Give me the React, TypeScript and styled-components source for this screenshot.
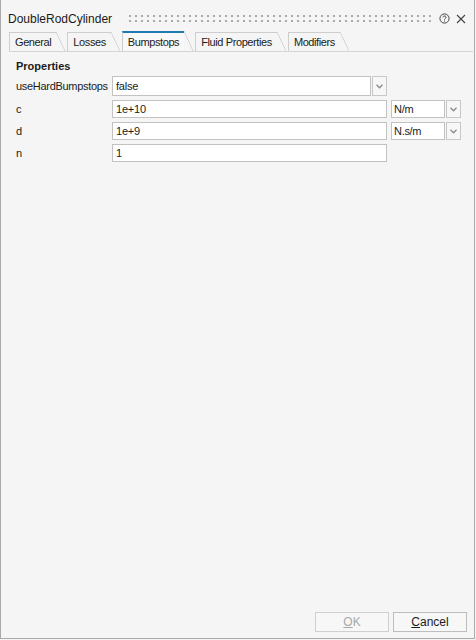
import styled, { createGlobalStyle } from "styled-components";

const GlobalStyle = createGlobalStyle`
  html, body {
    margin: 0;
    padding: 0;
    background: #f5f5f5;
  }
  body {
    font-family: "Liberation Sans", Arial, sans-serif;
    color: #1b1b1b;
  }
`;

const tabs = ["General", "Losses", "Bumpstops", "Fluid Properties", "Modifiers"];
const activeTab = "Bumpstops";

const App = () => {
  return (
    <>
      <GlobalStyle />
      <Window>
        <TitleBar>
          <Title>DoubleRodCylinder</Title>
          <Grip>
            <svg width="100%" height="7">
              <defs>
                <pattern id="grip" width="6" height="5" patternUnits="userSpaceOnUse">
                  <rect x="0" y="0" width="2" height="2" fill="#a9a9a9" />
                </pattern>
              </defs>
              <rect x="0" y="0" width="100%" height="7" fill="url(#grip)" />
            </svg>
          </Grip>
          <TitleIcons>
            <svg width="11" height="11" viewBox="0 0 11 11">
              <circle cx="5.5" cy="5.5" r="4.6" fill="none" stroke="#444" strokeWidth="1" />
              <path
                d="M3.9 4.3 C3.9 2.6 7.1 2.6 7.1 4.2 C7.1 5.3 5.5 5.3 5.5 6.6"
                fill="none"
                stroke="#444"
                strokeWidth="1"
              />
              <rect x="5" y="7.6" width="1" height="1" fill="#444" />
            </svg>
            <svg width="10" height="10" viewBox="0 0 10 10">
              <path d="M1 1 L9 9 M9 1 L1 9" stroke="#444" strokeWidth="1.1" />
            </svg>
          </TitleIcons>
        </TitleBar>

        <TabStrip>
          {tabs.map((t) => (
            <Tab key={t} $active={t === activeTab}>
              {t}
            </Tab>
          ))}
        </TabStrip>

        <Content>
          <SectionHeader>Properties</SectionHeader>
          <Rows>
            <Row $h={20}>
              <Label>useHardBumpstops</Label>
              <Field $w={259} $h={20}>false</Field>
              <DropButton $h={20}>
                <Chevron />
              </DropButton>
            </Row>
            <Row $h={18}>
              <Label>c</Label>
              <Field $w={275} $h={18}>1e+10</Field>
              <UnitBox>N/m</UnitBox>
              <DropButton $h={18}>
                <Chevron />
              </DropButton>
            </Row>
            <Row $h={18}>
              <Label>d</Label>
              <Field $w={275} $h={18}>1e+9</Field>
              <UnitBox>N.s/m</UnitBox>
              <DropButton $h={18}>
                <Chevron />
              </DropButton>
            </Row>
            <Row $h={18}>
              <Label>n</Label>
              <Field $w={275} $h={18}>1</Field>
            </Row>
          </Rows>
        </Content>

        <Footer>
          <Button $disabled>
            <u>O</u>K
          </Button>
          <Button>
            <u>C</u>ancel
          </Button>
        </Footer>
      </Window>
    </>
  );
};

export default App;

const Chevron = () => (
  <svg width="7" height="5" viewBox="0 0 7 5">
    <path d="M0.5 0.8 L3.5 3.8 L6.5 0.8" fill="none" stroke="#8a8a8a" strokeWidth="1.3" />
  </svg>
);

// Styled Components
const Window = styled.div`
  width: 475px;
  height: 639px;
  box-sizing: border-box;
  border: 1px solid #aaaaaa;
  border-top: none;
  display: flex;
  flex-direction: column;
  background: #f5f5f5;
`;

const TitleBar = styled.div`
  height: 31px;
  display: flex;
  flex-direction: row;
  align-items: center;
  padding: 0 7px 0 7px;
  box-sizing: border-box;
`;

const Title = styled.div`
  font-size: 12px;
  color: #1b1b1b;
  margin-top: 7px;
`;

const Grip = styled.div`
  flex: 1;
  height: 7px;
  margin: 6px 8px 0 17px;
  display: flex;
`;

const TitleIcons = styled.div`
  display: flex;
  align-items: center;
  gap: 6px;
  margin-top: 6px;
  padding-right: 1px;
`;

const TabStrip = styled.div`
  height: 20px;
  display: flex;
  flex-direction: row;
  align-items: flex-end;
  gap: 11px;
  margin: 0 1px 0 8px;
  border-bottom: 1px solid #d4d4d4;
`;

const Tab = styled.div<{ $active?: boolean }>`
  position: relative;
  height: 18px;
  line-height: 19px;
  padding: 0 5px 0 5px;
  font-size: 11px;
  letter-spacing: -0.4px;
  color: #1b1b1b;
  border-left: 1px solid #cdcdcd;
  border-top: ${(p) => (p.$active ? "2px solid #1f7ab3" : "1px solid #cdcdcd")};
  background: ${(p) => (p.$active ? "#f8f8f8" : "#f5f5f5")};

  &::after {
    content: "";
    position: absolute;
    left: 100%;
    top: ${(p) => (p.$active ? -2 : -1)}px;
    bottom: 0;
    width: 9px;
    background: linear-gradient(
      to top right,
      transparent calc(50% - 0.7px),
      #cdcdcd 50%,
      transparent calc(50% + 0.7px)
    );
  }
`;

const Content = styled.div`
  flex: 1;
  padding: 7px 0 0 15px;
  font-size: 11px;
`;

const SectionHeader = styled.div`
  height: 14px;
  line-height: 14px;
  font-weight: bold;
  font-size: 11px;
  margin-bottom: 3px;
`;

const Rows = styled.div`
  display: flex;
  flex-direction: column;
  gap: 4px;
`;

const Row = styled.div<{ $h: number }>`
  height: ${(p) => p.$h}px;
  display: flex;
  flex-direction: row;
  align-items: center;
`;

const Label = styled.div`
  width: 96px;
  font-size: 11px;
  letter-spacing: -0.3px;
  white-space: nowrap;
`;

const Field = styled.div<{ $w: number; $h: number }>`
  width: ${(p) => p.$w}px;
  height: ${(p) => p.$h}px;
  line-height: ${(p) => p.$h - 2}px;
  box-sizing: border-box;
  border: 1px solid #c2c2c2;
  background: #ffffff;
  padding-left: 3px;
  font-size: 11px;
  letter-spacing: -0.2px;
`;

const UnitBox = styled.div`
  width: 54px;
  height: 18px;
  line-height: 16px;
  box-sizing: border-box;
  border: 1px solid #c2c2c2;
  background: #ffffff;
  margin-left: 4px;
  padding-left: 2px;
  font-size: 11px;
  letter-spacing: -0.3px;
`;

const DropButton = styled.div<{ $h: number }>`
  width: 15px;
  height: ${(p) => p.$h}px;
  box-sizing: border-box;
  border: 1px solid #c8c8c8;
  background: #f7f7f7;
  margin-left: 1px;
  display: flex;
  align-items: center;
  justify-content: center;
`;

const Footer = styled.div`
  display: flex;
  flex-direction: row;
  justify-content: flex-end;
  gap: 4px;
  padding: 0 7px 6px 0;
`;

const Button = styled.div<{ $disabled?: boolean }>`
  width: 74px;
  height: 20px;
  line-height: 18px;
  box-sizing: border-box;
  border: 1px solid ${(p) => (p.$disabled ? "#cfcfcf" : "#bdbdbd")};
  background: #f7f7f7;
  text-align: center;
  font-size: 12px;
  color: ${(p) => (p.$disabled ? "#a8a8a8" : "#1b1b1b")};
`;
